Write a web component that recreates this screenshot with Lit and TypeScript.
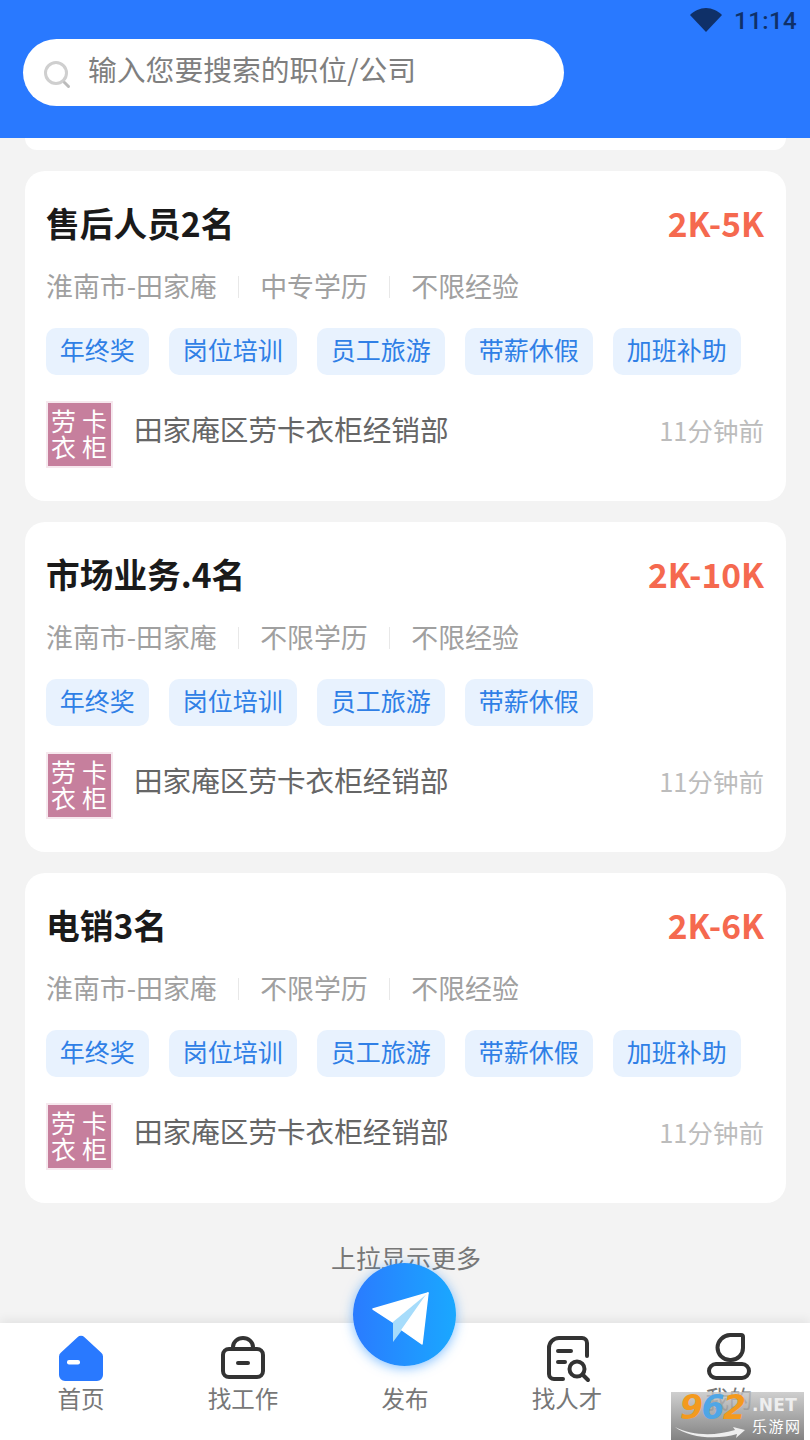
import { LitElement, html, css, svg } from "lit";
import { customElement } from "lit/decorators.js";

const jobs = [
  { title: "售后人员2名", pay: "2K-5K", edu: "中专学历", tags: ["年终奖", "岗位培训", "员工旅游", "带薪休假", "加班补助"] },
  { title: "市场业务.4名", pay: "2K-10K", edu: "不限学历", tags: ["年终奖", "岗位培训", "员工旅游", "带薪休假"] },
  { title: "电销3名", pay: "2K-6K", edu: "不限学历", tags: ["年终奖", "岗位培训", "员工旅游", "带薪休假", "加班补助"] },
];

const homeIcon = svg`<svg width="46" height="48" viewBox="0 0 46 48"><path d="M19.500 1.200a5 5 0 0 1 7 0L43 16.500a5 5 0 0 1 2 4V39a6 6 0 0 1-6 6H7a6 6 0 0 1-6-6V20.500a5 5 0 0 1 2-4z" fill="#2979ff"/><rect x="9" y="24" width="13" height="4.500" rx="2" fill="#fff"/></svg>`;
const jobIcon = svg`<svg width="46" height="48" viewBox="0 0 46 48" fill="none" stroke="#333" stroke-width="4" stroke-linecap="round"><rect x="3" y="13" width="40" height="28" rx="6"/><path d="M13 13v-2a10 9 0 0 1 20 0v2"/><path d="M18 27h10"/></svg>`;
const talentIcon = svg`<svg width="46" height="48" viewBox="0 0 46 48" fill="none" stroke="#333" stroke-width="4" stroke-linecap="round"><path d="M19 43H10a5 5 0 0 1-5-5V12A10 10 0 0 1 15 2h23a5 5 0 0 1 5 5v13"/><path d="M14 15h13M14 26h7"/><circle cx="33" cy="33" r="7.500"/><path d="M39 39l5 5"/></svg>`;
const meIcon = svg`<svg width="46" height="48" viewBox="0 0 46 48" fill="none" stroke="#333" stroke-width="4"><path d="M24 -1h11a2 2 0 0 1 2 2v11a12 12 0 0 1-12 12h-1A12.500 12.500 0 0 1 11.500 11.500 13 13 0 0 1 24 -1z"/><rect x="3" y="28" width="40" height="14" rx="7"/></svg>`;
const plane = svg`<svg width="58" height="54" viewBox="0 0 58 54"><path d="M1 17 56 1 21 30z" fill="#fff" stroke="#fff" stroke-width="1.500" stroke-linejoin="round"/><path d="M56 1 21 30v20l9-12z" fill="#a6dcfb"/><path d="M56 1 50 52 30 38z" fill="#fff" stroke="#fff" stroke-width="1.500" stroke-linejoin="round"/></svg>`;
const swoosh = svg`<svg class="swoosh" width="70" height="14" viewBox="0 0 70 14"><path d="M0 2c18 9 40 9 60 3l-2-3 12 3-9 8 1-4C42 15 14 13 0 2z" fill="#eee"/></svg>`;

@customElement("app-root")
export class AppRoot extends LitElement {
  static styles = css`
    :host {
      display: flex; flex-direction: column; position: relative;
      width: 810px; height: 1440px; overflow: hidden; background: #f3f3f3;
      font-family: "Noto Sans CJK SC", "Noto Sans", sans-serif;
    }
    header { height: 138px; flex: none; background: #2979ff; box-sizing: border-box; }
    .status { height: 39px; display: flex; justify-content: flex-end; align-items: center; gap: 12px; padding: 0 13px 0 0; box-sizing: border-box; }
    .status svg { display: block; margin-top: 1px; }
    .time { font: 500 24px/39px Roboto, sans-serif; color: #0f3068; letter-spacing: 0.4px; padding-top: 3px; }
    .search {
      margin-left: 23px; width: 541px; height: 67px; border-radius: 33.500px; background: #fff;
      display: flex; align-items: center; padding-left: 20px; box-sizing: border-box; gap: 17px;
      font-size: 28.800px; color: #7f7f7f; white-space: nowrap;
    }
    .search span { padding-bottom: 8px; }
    .search svg { flex: none; margin-top: 5px; }
    main { flex: 1; min-height: 0; padding: 0 24px 0 25px; display: flex; flex-direction: column; gap: 21px; }
    .stub { height: 12px; background: #fff; border-radius: 0 0 20px 20px; flex: none; }
    .card { height: 330px; flex: none; box-sizing: border-box; background: #fff; border-radius: 20px; padding: 33px 22px 33px 21px; }
    .top { display: flex; justify-content: space-between; align-items: center; height: 40px; }
    .title { font-size: 33.700px; font-weight: 700; color: #1a1a1a; line-height: 40px; padding-bottom: 3px; }
    .pay { font-size: 33.500px; font-weight: 700; color: #f5694f; line-height: 40px; padding-bottom: 3px; }
    .sub { display: flex; align-items: center; height: 36px; margin-top: 25px; font-size: 26.900px; color: #a0a0a0; gap: 21px; white-space: nowrap; }
    .sub span { padding-bottom: 4px; }
    .sep { width: 1.500px; height: 22px; background: #e8e8e8; }
    .tags { display: flex; gap: 20.500px; margin-top: 23px; }
    .tag { height: 47px; line-height: 43px; padding: 0 13.750px; background: #e8f2fe; color: #2f7fe6; font-size: 25px; border-radius: 10px; white-space: nowrap; }
    .co { display: flex; align-items: center; height: 67px; margin-top: 26px; }
    .logo {
      width: 67px; height: 67px; box-sizing: border-box; border: 2px solid #f6e8ee; background: #c67f9d; color: #fff;
      display: grid; grid-template-columns: 1fr 1fr; grid-template-rows: 26px 26px; align-content: center; font-size: 25px; line-height: 26px; place-items: center;
      padding: 0 1px 4px 0; flex: none;
    }
    .name { margin-left: 21px; font-size: 28.600px; color: #666; flex: 1; white-space: nowrap; padding-bottom: 12px; }
    .ago { font-size: 25.500px; color: #bcbcbc; white-space: nowrap; padding-bottom: 10px; }
    .more { text-align: center; font-size: 25px; color: #777; margin: 15px 0 0 1px; line-height: 36px; }
    nav {
      height: 117px; flex: none; background: #fff; display: grid; grid-template-columns: repeat(5, 162px);
      box-shadow: 0 -3px 10px rgba(0,0,0,.07); position: relative;
    }
    .tab { display: flex; flex-direction: column; align-items: center; padding-top: 13px; color: #777; font-size: 23.500px; line-height: 30px; }
    .tab svg { display: block; height: 48px; overflow: visible; }
    .tab span { margin-top: -1px; }
    .spacer { height: 48px; }
    .fab {
      position: absolute; left: 353px; top: 1263px; width: 103px; height: 103px; border-radius: 50%;
      background: linear-gradient(90deg, #2a7bff, #1aa8ff); box-shadow: 0 2px 12px rgba(30,140,255,.55);
      display: flex; align-items: center; justify-content: center;
    }
    .fab svg { margin: 9px 0 0 -7px; }
    .mark {
      position: absolute; right: 6px; bottom: 0; width: 133px; height: 48px; overflow: hidden;
      background: linear-gradient(180deg, rgba(195,195,195,.8), rgba(120,120,120,.92));
      display: grid; grid-template-columns: 72px auto; grid-template-rows: 25px 22px; padding: 0 0 0 9px; box-sizing: border-box;
    }
    .n962 { font: italic 700 33px/32px "DejaVu Sans", sans-serif; letter-spacing: -1.500px; color: #f39a1e; grid-row: 1; white-space: nowrap; }
    .n962 i { color: #4fa6e6; font-style: inherit; }
    .net { font: 700 17px/26px "DejaVu Sans", sans-serif; color: #eee; letter-spacing: .3px; white-space: nowrap; }
    .lyw { grid-column: 2; font-size: 15px; line-height: 18px; color: #fff; letter-spacing: 1.500px; white-space: nowrap; }
    .swoosh { position: absolute; left: 4px; bottom: 1px; }
  `;

  render() {
    return html`
      <header>
        <div class="status">
          <svg width="32" height="24" viewBox="0 0 32 24"><path d="M0 7C4 3 10 0 16 0s12 3 16 7L16 24z" fill="#0f3068"/></svg>
          <span class="time">11:14</span>
        </div>
        <div class="search">
          <svg width="28" height="30" viewBox="0 0 28 30" fill="none"><circle cx="13" cy="13" r="10.500" stroke="#cfcfcf" stroke-width="3"/><path d="M21.500 22.500l4 4" stroke="#bbb" stroke-width="3" stroke-linecap="round"/></svg>
          <span>输入您要搜索的职位/公司</span>
        </div>
      </header>
      <main>
        <div class="stub"></div>
        ${jobs.map((j) => html`
          <section class="card">
            <div class="top"><span class="title">${j.title}</span><span class="pay">${j.pay}</span></div>
            <div class="sub"><span>淮南市-田家庵</span><i class="sep"></i><span>${j.edu}</span><i class="sep"></i><span>不限经验</span></div>
            <div class="tags">${j.tags.map((t) => html`<span class="tag">${t}</span>`)}</div>
            <div class="co">
              <div class="logo"><span>劳</span><span>卡</span><span>衣</span><span>柜</span></div>
              <span class="name">田家庵区劳卡衣柜经销部</span>
              <span class="ago">11分钟前</span>
            </div>
          </section>`)}
        <div class="more">上拉显示更多</div>
      </main>
      <nav>
        <div class="tab">${homeIcon}<span>首页</span></div>
        <div class="tab">${jobIcon}<span>找工作</span></div>
        <div class="tab"><div class="spacer"></div><span>发布</span></div>
        <div class="tab">${talentIcon}<span>找人才</span></div>
        <div class="tab">${meIcon}<span>我的</span></div>
      </nav>
      <div class="fab">${plane}</div>
      <div class="mark">
        <span class="n962">9<i>6</i>2</span>
        <span class="net">.NET</span>
        <span class="lyw">乐游网</span>
        ${swoosh}
      </div>
    `;
  }
}
